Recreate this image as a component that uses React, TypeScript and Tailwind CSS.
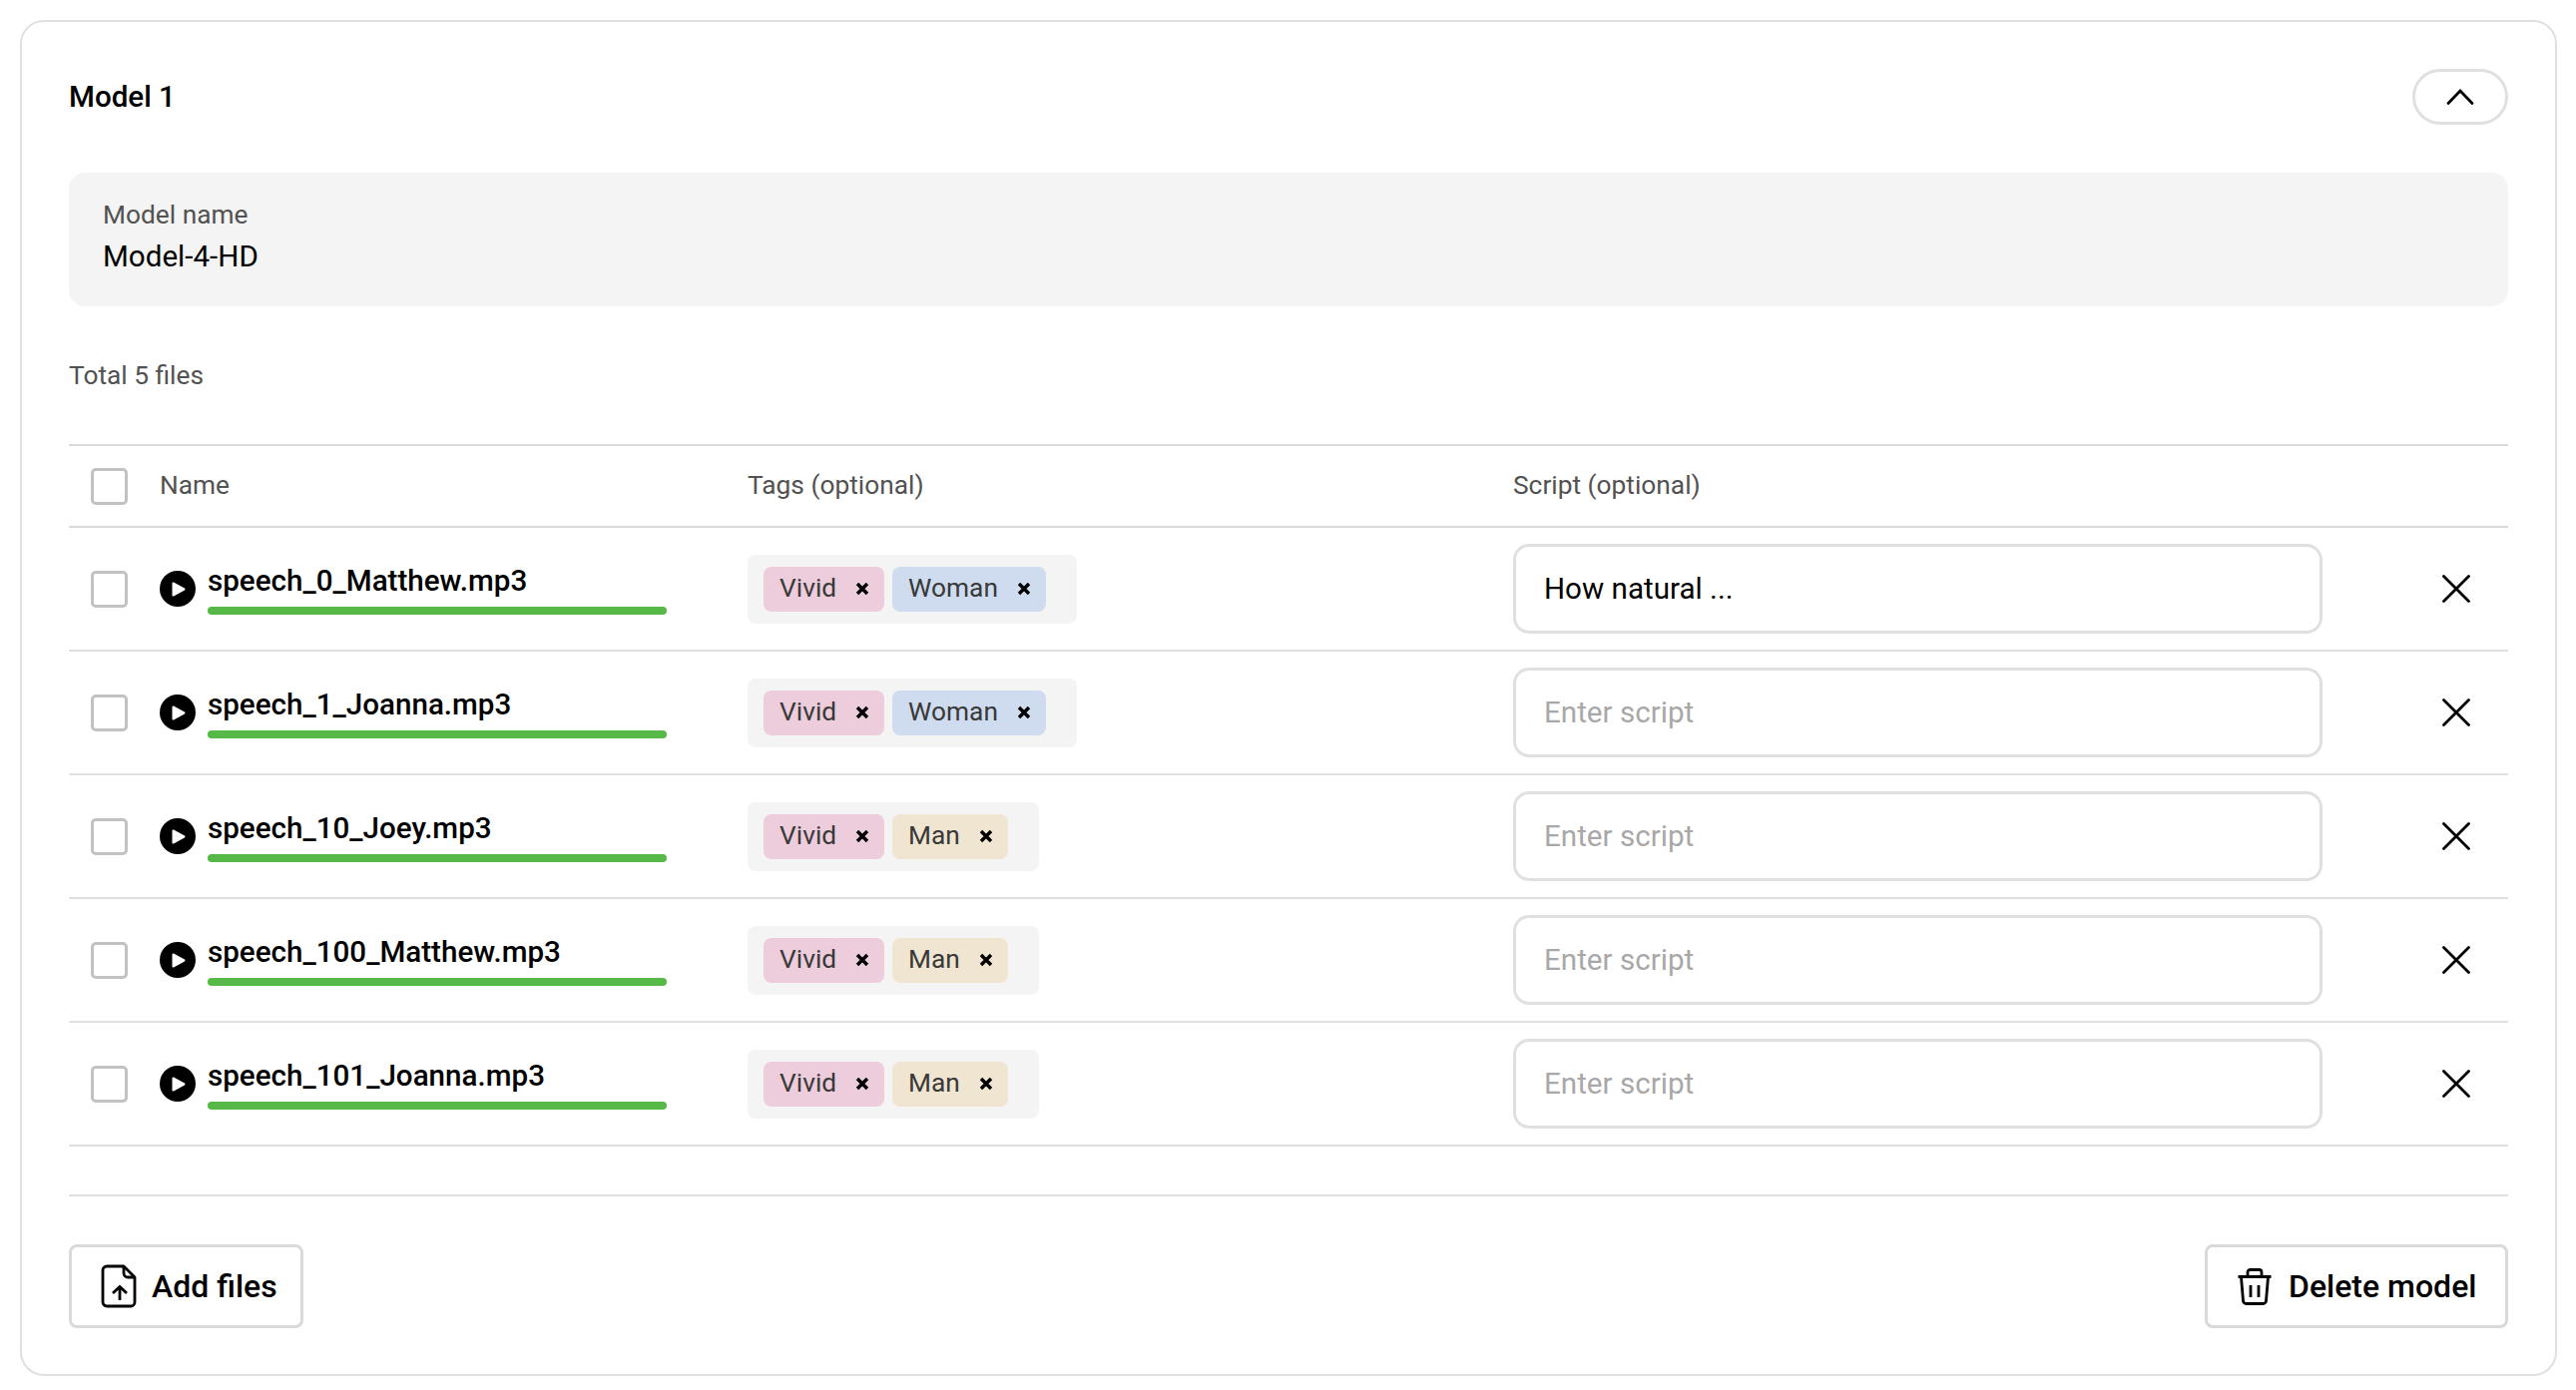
import React from "react";

type Row = { name: string; tag: "Woman" | "Man"; script?: string };
const rows: Row[] = [
  { name: "speech_0_Matthew.mp3", tag: "Woman", script: "How natural ..." },
  { name: "speech_1_Joanna.mp3", tag: "Woman" },
  { name: "speech_10_Joey.mp3", tag: "Man" },
  { name: "speech_100_Matthew.mp3", tag: "Man" },
  { name: "speech_101_Joanna.mp3", tag: "Man" },
];

const Check = () => (
  <span className="block w-[37px] h-[37px] shrink-0 rounded-[5px] border-[3px] border-[#c2c2c2] bg-white" />
);

const Play = () => (
  <svg width="36" height="36" viewBox="0 0 36 36" className="shrink-0">
    <circle cx="18" cy="18" r="18" fill="#000" />
    <path d="M13.5 12.5 L24.5 18.5 L13.5 24.5 Z" fill="#fff" stroke="#fff" strokeWidth="2" strokeLinejoin="round" />
  </svg>
);

const TagX = () => (
  <svg width="14" height="14" viewBox="0 0 14 14" className="shrink-0">
    <path d="M2 2 L12 12 M12 2 L2 12" stroke="#000" strokeWidth="3.4" strokeLinecap="butt" fill="none" />
  </svg>
);

const Tag = ({ label, color }: { label: string; color: string }) => (
  <span className={`flex items-center h-[45px] rounded-[8px] pl-[16px] pr-[15px] gap-[19px] text-[26.3px] text-[#393939] ${color}`}>
    <span>{label}</span>
    <TagX />
  </span>
);

export default function App() {
  return (
    <div className="bg-white h-[1393px] pt-[20px] pl-[20px] w-[2581px] font-['Roboto',sans-serif]">
      <div className="w-[2542px] h-[1359px] rounded-[24px] border-2 border-[#e0e0e0] px-[47px] pt-[47px]">
        <div className="flex items-center justify-between h-[56px]">
          <h2 className="text-[29.6px] font-medium text-black">Model 1</h2>
          <button className="flex items-center justify-center w-[96px] h-[56px] rounded-full border-[3px] border-[#e0e0e0]">
            <svg width="28" height="18" viewBox="0 0 28 18">
              <path d="M2 15.5 L14 3 L26 15.5" stroke="#000" strokeWidth="2.8" fill="none" strokeLinecap="round" />
            </svg>
          </button>
        </div>

        <div className="mt-[48px] h-[134px] rounded-[16px] bg-[#f4f4f4] pl-[34px] pt-[24px]">
          <div className="text-[26.3px] leading-[36px] text-[#525252]">Model name</div>
          <div className="mt-[4px] text-[29.6px] leading-[40px] text-black">Model-4-HD</div>
        </div>

        <div className="mt-[49px] text-[26.3px] leading-[40px] text-[#525252]">Total 5 files</div>

        <div className="mt-[49px] border-t-2 border-[#d9d9d9]">
          <div className="grid grid-cols-[680px_767px_811px_186px] items-center h-[82px] border-b-2 border-[#d9d9d9] text-[26.3px] text-[#525252]">
            <div className="flex items-center pl-[22px] gap-[32px]">
              <Check />
              <span>Name</span>
            </div>
            <div>Tags (optional)</div>
            <div>Script (optional)</div>
            <div />
          </div>

          {rows.map((r) => (
            <div key={r.name} className="grid grid-cols-[680px_767px_811px_186px] items-center h-[124px] border-b-2 border-[#e0e0e0]">
              <div className="flex items-center pl-[22px]">
                <Check />
                <span className="ml-[32px]"><Play /></span>
                <div className="ml-[12px] w-[460px]">
                  <div className="text-[29.6px] leading-[36px] font-medium text-black">{r.name}</div>
                  <div className="mt-[8px] h-[8px] rounded-[4px] bg-[#56b947]" />
                </div>
              </div>
              <div>
                <div className="inline-flex gap-[8px] rounded-[8px] bg-[#f4f4f4] pl-[16px] pr-[31px] py-[12px]">
                  <Tag label="Vivid" color="bg-[#edcddc]" />
                  <Tag label={r.tag} color={r.tag === "Woman" ? "bg-[#cfdcef]" : "bg-[#f0e5d0]"} />
                </div>
              </div>
              <div className="flex items-center h-[90px] rounded-[16px] border-[3px] border-[#e0e0e0] pl-[28px] text-[29.6px]">
                <span className={r.script ? "text-black" : "text-[#a8a8a8]"}>{r.script ?? "Enter script"}</span>
              </div>
              <div className="flex justify-end pr-[38px]">
                <svg width="28" height="28" viewBox="0 0 28 28">
                  <path d="M1.5 1.5 L26.5 26.5 M26.5 1.5 L1.5 26.5" stroke="#000" strokeWidth="2.8" strokeLinecap="round" fill="none" />
                </svg>
              </div>
            </div>
          ))}

          <div className="h-[50px] border-b-2 border-[#e0e0e0]" />
        </div>

        <div className="mt-[48px] flex justify-between">
          <button className="flex items-center h-[84px] w-[235px] rounded-[8px] border-[3px] border-[#d9d9d9] pl-[29px] gap-[15px] text-[32px] font-medium text-black">
            <svg width="36" height="44" viewBox="0 0 36 44" className="shrink-0">
              <path d="M7 2 H23 L34 13 V38 a4 4 0 0 1 -4 4 H6 a4 4 0 0 1 -4 -4 V6 a4 4 0 0 1 4 -4 Z" stroke="#000" strokeWidth="2.8" fill="none" strokeLinejoin="round" />
              <path d="M23 2 V9 a4 4 0 0 0 4 4 H34" stroke="#000" strokeWidth="2.8" fill="none" />
              <path d="M19 36 V23 M12 29 L19 22.5 L26 29" stroke="#000" strokeWidth="2.8" fill="none" />
            </svg>
            <span>Add files</span>
          </button>
          <button className="flex items-center h-[84px] w-[304px] rounded-[8px] border-[3px] border-[#d9d9d9] pl-[30px] gap-[17px] text-[32px] font-medium text-black">
            <svg width="34" height="37" viewBox="0 0 34 37" className="shrink-0">
              <path d="M0.5 8.5 H33.5" stroke="#000" strokeWidth="2.8" fill="none" />
              <path d="M10 8 V4 a2.5 2.5 0 0 1 2.5 -2.5 H21.5 a2.5 2.5 0 0 1 2.5 2.5 V8" stroke="#000" strokeWidth="2.8" fill="none" />
              <path d="M3.5 9 L5.5 32.5 a3 3 0 0 0 3 3 H25.5 a3 3 0 0 0 3 -3 L30.5 9" stroke="#000" strokeWidth="2.8" fill="none" />
              <path d="M13 17 V29 M21 17 V29" stroke="#000" strokeWidth="2.8" fill="none" />
            </svg>
            <span>Delete model</span>
          </button>
        </div>
      </div>
    </div>
  );
}
